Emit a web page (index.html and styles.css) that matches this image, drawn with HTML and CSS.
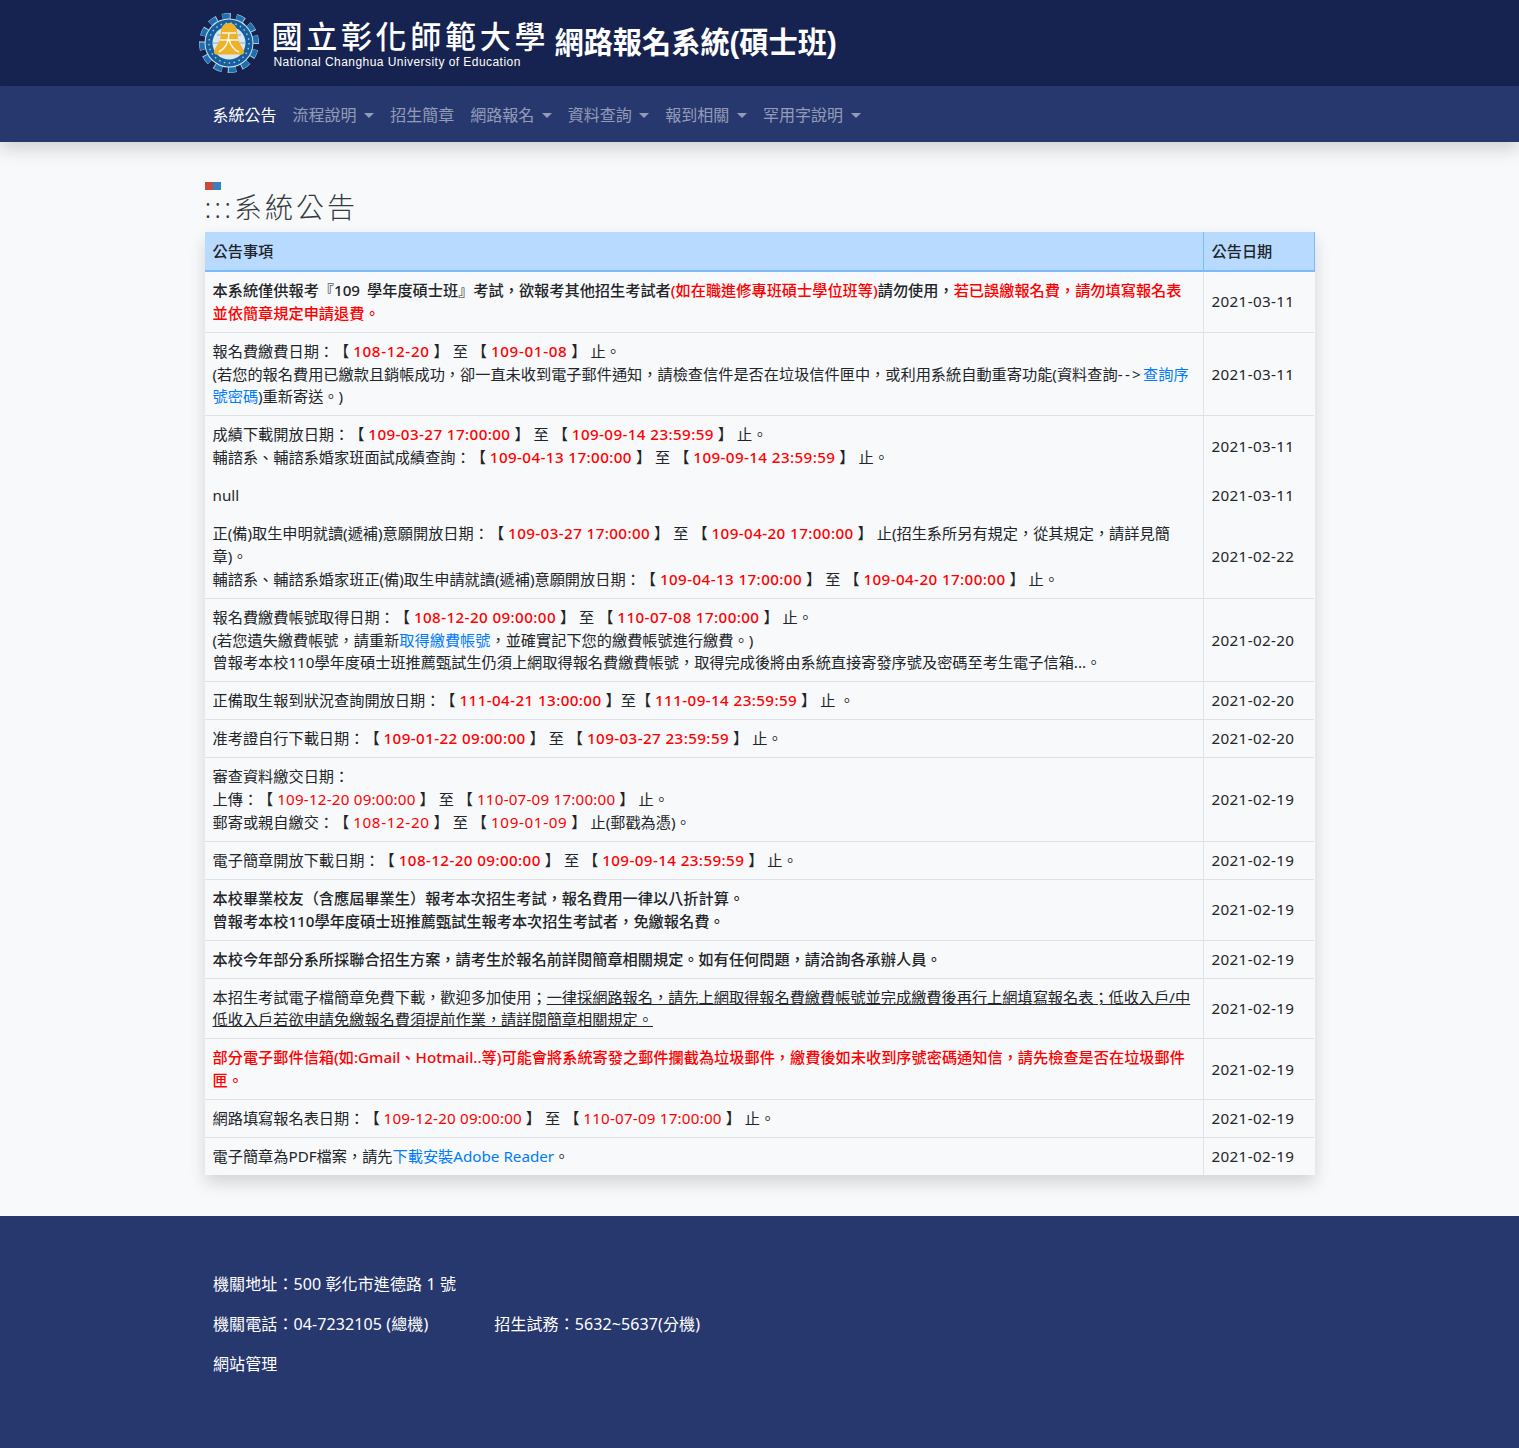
FILE: index.html
```html
<!DOCTYPE html>
<html lang="zh-Hant">
<head>
<meta charset="utf-8">
<title>網路報名系統(碩士班)</title>
<link rel="stylesheet" href="styles.css">
</head>
<body>
<header class="site-header">
  <div class="brand">
    <svg class="logo" viewBox="0 0 60 60" width="60" height="60" aria-hidden="true">
      <circle cx="30" cy="30" r="26" fill="none" stroke="#a9c6dc" stroke-width="8" stroke-dasharray="8.2 5.41" transform="rotate(-16 30 30)"/>
      <circle cx="30" cy="30" r="26" fill="none" stroke="#1f6fb0" stroke-width="7" stroke-dasharray="7 6.61" transform="rotate(-15.500 30 30)"/>
      <circle cx="30" cy="30" r="24.500" fill="#cfe0ec"/>
      <circle cx="30" cy="30" r="23.500" fill="#155f9e"/>
      <circle cx="30" cy="30" r="16.500" fill="#dbe8f1"/>
      <path d="M14 30h32M18 22h24M18 38h24" stroke="#7fb0d2" stroke-width="1.200" fill="none"/>
      <path d="M30 10c5 0 7.500 3 8 8 .5 6 1 10 3 13 1.500 2.500 3.500 4.500 4 8 .2 1.500-.8 2.500-2 2.500H17c-1.200 0-2.200-1-2-2.500.5-3.500 2.500-5.500 4-8 2-3 2.500-7 3-13 .5-5 3-8 8-8z" fill="#eeb12a"/>
      <path d="M23 20h14M21 27h18M30 20c0 8-3 15-10 19M30 27c2 6 5 10 10 12" stroke="#fff8e6" stroke-width="1.500" fill="none"/>
      <circle cx="30" cy="30" r="20" fill="none" stroke="#cfe2ef" stroke-width="1.400" stroke-dasharray="1.500 3.500" opacity=".8"/>
    </svg>
    <div class="school">
      <div class="school-zh">國立彰化師範大學</div>
      <div class="school-en">National Changhua University of Education</div>
    </div>
    <h1 class="system-title">網路報名系統(碩士班)</h1>
  </div>
</header>

<nav class="navbar">
  <ul class="nav-list">
    <li class="nav-link active">系統公告</li>
    <li class="nav-link caret">流程說明</li>
    <li class="nav-link">招生簡章</li>
    <li class="nav-link caret">網路報名</li>
    <li class="nav-link caret">資料查詢</li>
    <li class="nav-link caret">報到相關</li>
    <li class="nav-link caret">罕用字說明</li>
  </ul>
</nav>

<main class="content">
  <div class="mark"><i class="mark-red"></i><i class="mark-blue"></i></div>
  <h2 class="page-title">:::系統公告</h2>
  <table class="notice-table">
    <colgroup><col><col class="col-date"></colgroup>
    <thead>
      <tr><th>公告事項</th><th>公告日期</th></tr>
    </thead>
    <tbody>
      <tr>
        <td class="strong first-note">本系統僅供報考『109 學年度碩士班』考試，欲報考其他招生考試者<span class="red">(如在職進修專班碩士學位班等)</span>請勿使用，<span class="red">若已誤繳報名費，請勿填寫報名表<br>並依簡章規定申請退費。</span></td>
        <td class="date">2021-03-11</td>
      </tr>
      <tr>
        <td>報名費繳費日期：【 <span class="when short">108-12-20</span> 】 至 【 <span class="when short">109-01-08</span> 】 止。<br>(若您的報名費用已繳款且銷帳成功，卻一直未收到電子郵件通知，請檢查信件是否在垃圾信件匣中，或利用系統自動重寄功能(資料查詢<span class="arrow">--&gt;</span><a class="link" href="#">查詢序號密碼</a>)重新寄送。)</td>
        <td class="date">2021-03-11</td>
      </tr>
      <tr>
        <td>成績下載開放日期：【 <span class="when">109-03-27 17:00:00</span> 】 至 【 <span class="when">109-09-14 23:59:59</span> 】 止。<br>輔諮系、輔諮系婚家班面試成績查詢：【 <span class="when">109-04-13 17:00:00</span> 】 至 【 <span class="when">109-09-14 23:59:59</span> 】 止。</td>
        <td class="date">2021-03-11</td>
      </tr>
      <tr class="no-line">
        <td>null</td>
        <td class="date">2021-03-11</td>
      </tr>
      <tr class="no-line">
        <td>正(備)取生申明就讀(遞補)意願開放日期：【 <span class="when">109-03-27 17:00:00</span> 】 至 【 <span class="when">109-04-20 17:00:00</span> 】 止(招生系所另有規定，從其規定，請詳見簡章)。<br>輔諮系、輔諮系婚家班正(備)取生申請就讀(遞補)意願開放日期：【 <span class="when">109-04-13 17:00:00</span> 】 至 【 <span class="when">109-04-20 17:00:00</span> 】 止。</td>
        <td class="date">2021-02-22</td>
      </tr>
      <tr>
        <td>報名費繳費帳號取得日期：【 <span class="when">108-12-20 09:00:00</span> 】 至 【 <span class="when">110-07-08 17:00:00</span> 】 止。<br>(若您遺失繳費帳號，請重新<a class="link" href="#">取得繳費帳號</a>，並確實記下您的繳費帳號進行繳費。)<br>曾報考本校110學年度碩士班推薦甄試生仍須上網取得報名費繳費帳號，取得完成後將由系統直接寄發序號及密碼至考生電子信箱...。</td>
        <td class="date">2021-02-20</td>
      </tr>
      <tr>
        <td>正備取生報到狀況查詢開放日期：【 <span class="when">111-04-21 13:00:00</span> 】至【 <span class="when">111-09-14 23:59:59</span> 】 止 。</td>
        <td class="date">2021-02-20</td>
      </tr>
      <tr>
        <td>准考證自行下載日期：【 <span class="when">109-01-22 09:00:00</span> 】 至 【 <span class="when">109-03-27 23:59:59</span> 】 止。</td>
        <td class="date">2021-02-20</td>
      </tr>
      <tr>
        <td>審查資料繳交日期：<br>上傳：【 <span class="when-plain">109-12-20 09:00:00</span> 】 至 【 <span class="when-plain">110-07-09 17:00:00</span> 】 止。<br>郵寄或親自繳交：【 <span class="when-plain short">108-12-20</span> 】 至 【 <span class="when-plain short">109-01-09</span> 】 止(郵戳為憑)。</td>
        <td class="date">2021-02-19</td>
      </tr>
      <tr>
        <td>電子簡章開放下載日期：【 <span class="when">108-12-20 09:00:00</span> 】 至 【 <span class="when">109-09-14 23:59:59</span> 】 止。</td>
        <td class="date">2021-02-19</td>
      </tr>
      <tr>
        <td class="strong">本校畢業校友（含應屆畢業生）報考本次招生考試，報名費用一律以八折計算。<br>曾報考本校110學年度碩士班推薦甄試生報考本次招生考試者，免繳報名費。</td>
        <td class="date">2021-02-19</td>
      </tr>
      <tr>
        <td class="strong">本校今年部分系所採聯合招生方案，請考生於報名前詳閱簡章相關規定。如有任何問題，請洽詢各承辦人員。</td>
        <td class="date">2021-02-19</td>
      </tr>
      <tr>
        <td>本招生考試電子檔簡章免費下載，歡迎多加使用；<u>一律採網路報名，請先上網取得報名費繳費帳號並完成繳費後再行上網填寫報名表；低收入戶/中低收入戶若欲申請免繳報名費須提前作業，請詳閱簡章相關規定。</u></td>
        <td class="date">2021-02-19</td>
      </tr>
      <tr>
        <td class="strong red">部分電子郵件信箱(如:Gmail、Hotmail..等)可能會將系統寄發之郵件攔截為垃圾郵件，繳費後如未收到序號密碼通知信，請先檢查是否在垃圾郵件匣。</td>
        <td class="date">2021-02-19</td>
      </tr>
      <tr>
        <td>網路填寫報名表日期：【 <span class="when-plain">109-12-20 09:00:00</span> 】 至 【 <span class="when-plain">110-07-09 17:00:00</span> 】 止。</td>
        <td class="date">2021-02-19</td>
      </tr>
      <tr>
        <td>電子簡章為PDF檔案，請先<a class="link" href="#">下載安裝Adobe Reader</a>。</td>
        <td class="date">2021-02-19</td>
      </tr>
    </tbody>
  </table>
</main>

<footer class="site-footer">
  <p class="foot-line">機關地址：500 彰化市進德路 1 號</p>
  <p class="foot-line">機關電話：04-7232105 (總機)<span class="foot-gap">招生試務：5632~5637(分機)</span></p>
  <p class="foot-line">網站管理</p>
</footer>
</body>
</html>
```

FILE: styles.css
```css
* { box-sizing: border-box; }

body {
  margin: 0;
  background: #f8f9fa;
  color: #212529;
  font-family: "Noto Sans", "Noto Sans CJK TC", sans-serif;
  font-size: 16px;
  line-height: 1.5;
  text-spacing-trim: space-all;
  text-autospace: no-autospace;
}

.site-header {
  height: 86px;
  background: #16224f;
}

.brand {
  width: 1140px;
  height: 86px;
  margin: 0 auto;
  padding-left: 9px;
  display: flex;
  align-items: center;
}

.logo { flex: none; }

.school {
  margin-left: 13px;
  width: 283px;
  color: #fff;
}

.school-zh {
  font-size: 31px;
  line-height: 37px;
  letter-spacing: 3.700px;
  font-weight: 500;
  white-space: nowrap;
}

.school-en {
  margin-left: 2px;
  font-family: "Liberation Sans", sans-serif;
  font-size: 12px;
  letter-spacing: .45px;
  line-height: 14px;
  white-space: nowrap;
}

.system-title {
  margin: 0;
  color: #fff;
  font-size: 29.200px;
  line-height: 36px;
  font-weight: 700;
  font-family: "Liberation Sans", "Noto Sans CJK TC", sans-serif;
  white-space: nowrap;
}

.navbar {
  height: 56px;
  background: #27386f;
  box-shadow: 0 8px 16px rgba(0, 0, 0, .15);
  position: relative;
}

.nav-list {
  width: 1140px;
  margin: 0 auto;
  padding: 8px 15px;
  list-style: none;
  display: flex;
}

.nav-link {
  padding: 9px 8px 7px;
  color: rgba(255, 255, 255, .5);
  white-space: nowrap;
}

.nav-link.active { color: #fff; }

.caret::after {
  content: "";
  display: inline-block;
  margin-left: 7.600px;
  vertical-align: 3px;
  border-top: 5px solid;
  border-right: 5px solid transparent;
  border-left: 5px solid transparent;
}

.content {
  width: 1140px;
  margin: 0 auto;
  padding: 40px 15px 41px;
}

.mark {
  display: flex;
  height: 8px;
}

.mark-red, .mark-blue {
  display: block;
  width: 8px;
  height: 8px;
}

.mark-red { background: #c94b38; }
.mark-blue { background: #3a7fbe; }

.page-title {
  margin: 0;
  padding: 0 0 6px;
  height: 42px;
  font-size: 28px;
  line-height: 34px;
  font-weight: 300;
  letter-spacing: 3px;
  color: #343a40;
}

.notice-table {
  width: 1110px;
  table-layout: fixed;
  border-collapse: collapse;
  box-shadow: 0 8px 16px rgba(0, 0, 0, .15);
  font-size: 15.200px;
  line-height: 22.800px;
}

.col-date { width: 111px; }

.notice-table th {
  padding: 8px 8px 7.200px;
  text-align: left;
  font-weight: 500;
  background: #b8daff;
  border-bottom: 2px solid #7abaff;
  color: #212529;
}

.notice-table th + th {
  border-left: 1px solid #7abaff;
  border-right: 1px solid #7abaff;
}

.notice-table td {
  padding: 7.100px 8px;
  vertical-align: middle;
  border-top: 1px solid #dee2e6;
}

.notice-table td.date {
  border-left: 1px solid #dee2e6;
  letter-spacing: .35px;
  white-space: nowrap;
}

.no-line td,
.no-line td.date { border-top-color: transparent; }

.strong { font-weight: 500; }
.first-note { word-spacing: 3px; }
.red { color: #f00; }
.when { color: #f00; font-weight: 500; letter-spacing: .4px; }
.when-plain { color: #f00; letter-spacing: .2px; }
.short { letter-spacing: .65px; }
.arrow { letter-spacing: 2.300px; }
.link { color: #007bff; text-decoration: none; }

.site-footer {
  height: 232px;
  background: #27386f;
  color: #fff;
  padding: 56px 0 0 213px;
  letter-spacing: .1px;
}

.foot-line {
  margin: 0 0 16px;
}

.foot-gap { margin-left: 66px; }
```
